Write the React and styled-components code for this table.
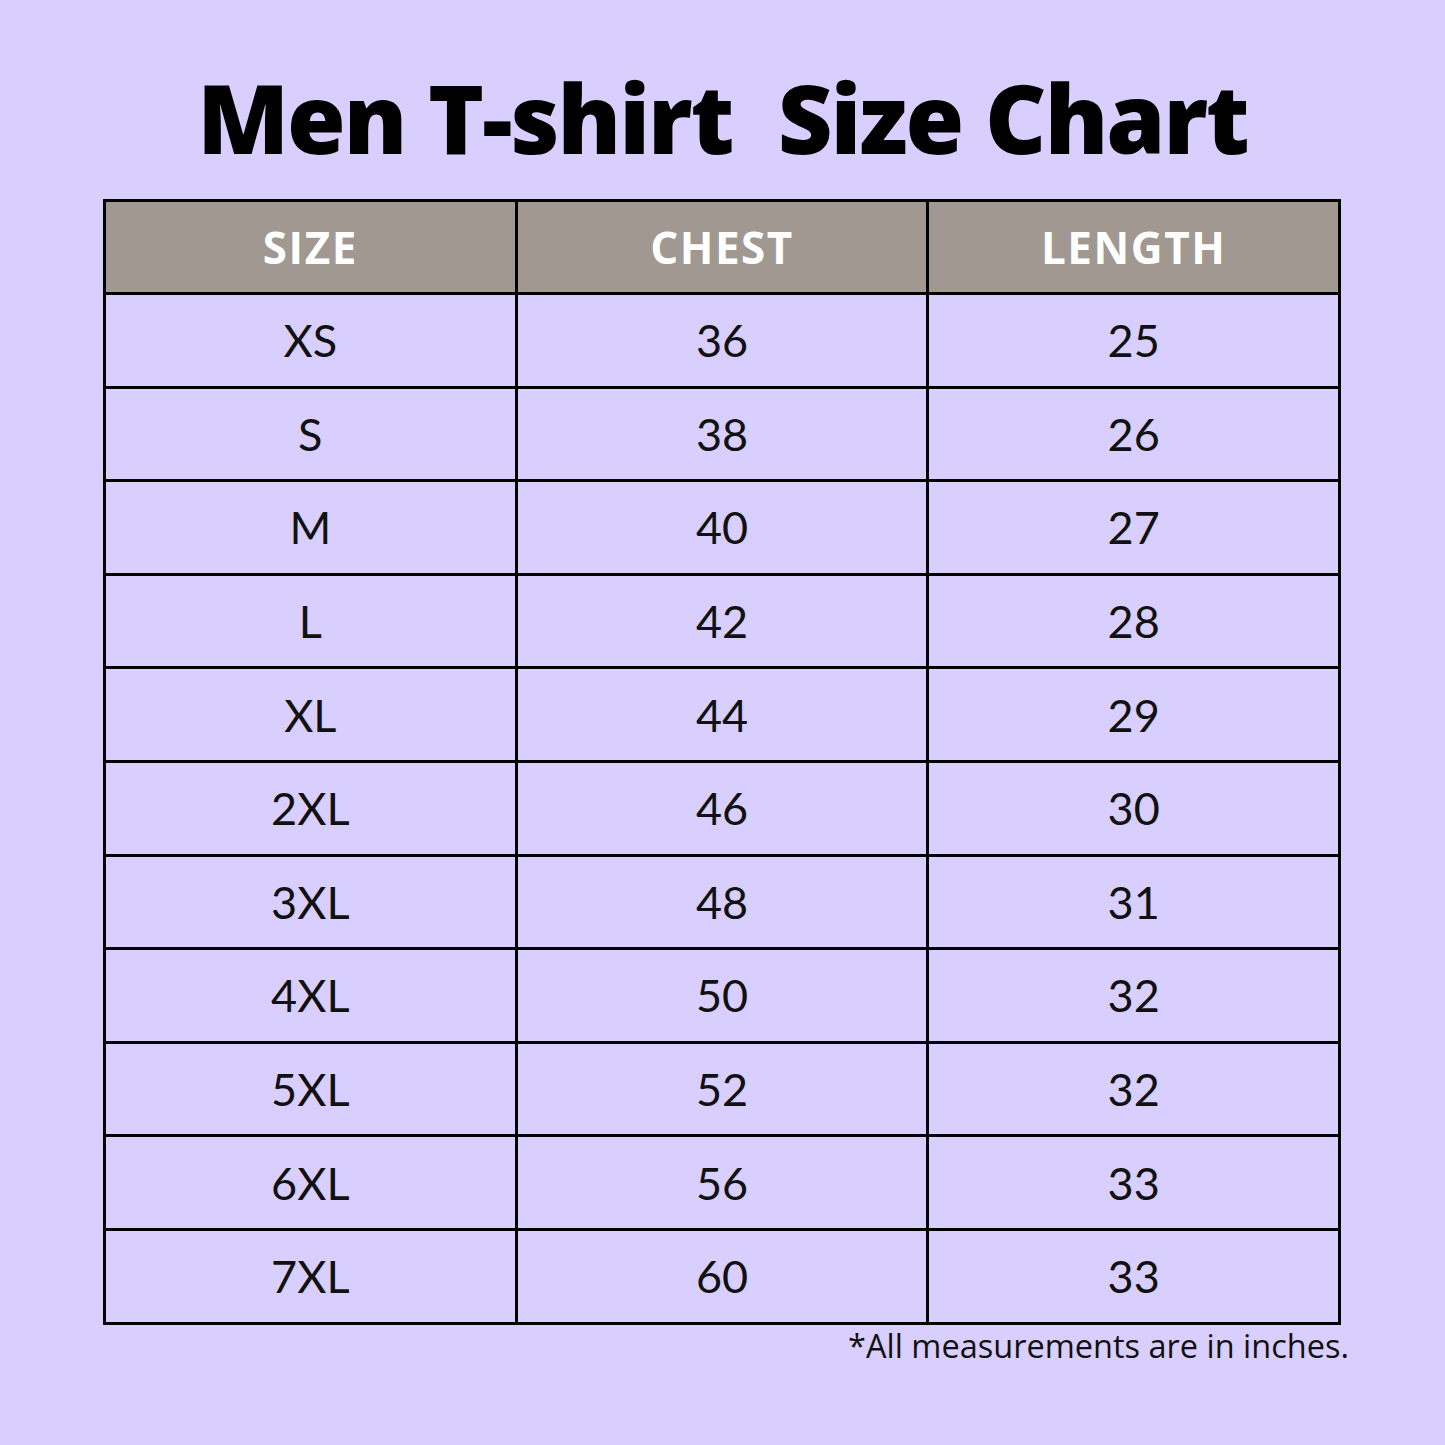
import styled, { createGlobalStyle } from "styled-components"

const rows = [
    ["XS", 36, 25],
    ["S", 38, 26],
    ["M", 40, 27],
    ["L", 42, 28],
    ["XL", 44, 29],
    ["2XL", 46, 30],
    ["3XL", 48, 31],
    ["4XL", 50, 32],
    ["5XL", 52, 32],
    ["6XL", 56, 33],
    ["7XL", 60, 33],
]

export default function App() {
    return (
        <>
            <GlobalStyle />
            <Page>
                <Title>Men T-shirt&nbsp; Size Chart</Title>
                <Chart>
                    <thead>
                        <tr>
                            <Head>SIZE</Head>
                            <Head>CHEST</Head>
                            <Head>LENGTH</Head>
                        </tr>
                    </thead>
                    <tbody>
                        {rows.map(([size, chest, length]) => (
                            <tr key={size}>
                                <Cell>{size}</Cell>
                                <Cell>{chest}</Cell>
                                <Cell>{length}</Cell>
                            </tr>
                        ))}
                    </tbody>
                </Chart>
                <Note>*All measurements are in inches.</Note>
            </Page>
        </>
    )
}

const GlobalStyle = createGlobalStyle`
    html, body {
        margin: 0;
        padding: 0;
        background: #d9cffe;
    }
`
const Page = styled.div`
    width: 1445px;
    height: 1445px;
    display: flex;
    flex-direction: column;
    align-items: center;
    background: #d9cffe;
    box-sizing: border-box;
    padding-top: 60px;
`
const Title = styled.h1`
    margin: 0;
    height: 139px;
    font-family: "Open Sans", sans-serif;
    font-weight: 800;
    font-size: 95px;
    line-height: 114px;
    letter-spacing: -2px;
    color: #000;
    white-space: pre;
`
const Chart = styled.table`
    width: 1238px;
    border-collapse: collapse;
    table-layout: fixed;
    border: 3px solid #000;
    margin-left: -1px;
`
const Head = styled.th`
    height: 90px;
    padding: 0;
    background: #a09891;
    border: 3px solid #000;
    color: #fff;
    font-family: "Open Sans", sans-serif;
    font-weight: 700;
    font-size: 44px;
    letter-spacing: 1.5px;
    text-align: center;
    vertical-align: middle;
`
const Cell = styled.td`
    height: 90.6px;
    padding: 0;
    border: 3px solid #000;
    color: #111;
    font-family: "Lato", sans-serif;
    font-weight: 400;
    font-size: 45px;
    text-align: center;
    vertical-align: middle;
`
const Note = styled.div`
    align-self: flex-end;
    margin: -2px 96px 0 0;
    font-family: "Open Sans", sans-serif;
    font-size: 32.5px;
    color: #111;
`
